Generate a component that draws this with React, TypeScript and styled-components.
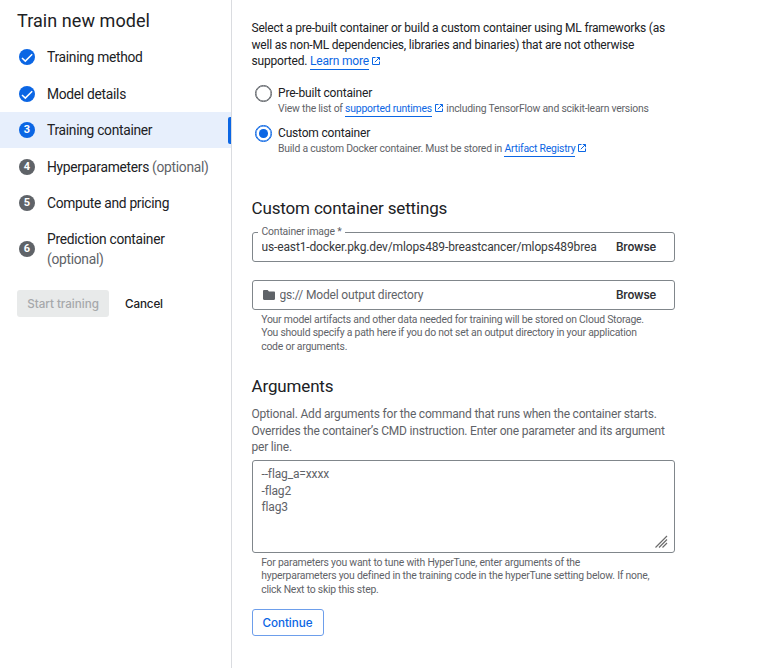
import React from "react";
import styled, { createGlobalStyle, css } from "styled-components";

const ink = "#202124";
const muted = "#5f6368";
const blue = "#0b66e4";
const outline = "#80868b";

const GlobalStyle = createGlobalStyle`
  * { box-sizing: border-box; }
  body { margin: 0; background: #fff; color: ${ink}; font-family: Roboto, "Liberation Sans", sans-serif; }
`;

const Page = styled.div`
  display: flex;
  width: 769px;
  height: 668px;
  overflow: hidden;
  white-space: nowrap;
`;

const Sidebar = styled.aside`
  flex: none;
  width: 232px;
  border-right: 1px solid #dadce0;
`;

const SidebarTitle = styled.h1`
  margin: 0;
  padding: 9px 0 6px 17px;
  font-size: 18px;
  font-weight: 400;
  line-height: 24px;
  letter-spacing: 0.07px;
`;

const StepList = styled.ol`
  list-style: none;
  margin: 0;
  padding: 0;
`;

const StepItem = styled.li<{ $active?: boolean }>`
  display: flex;
  align-items: center;
  min-height: 36.4px;
  padding: 8.4px 0 8px 19px;
  gap: 12px;
  font-size: 13.8px;
  line-height: 20px;
  letter-spacing: -0.29px;
  ${({ $active }) =>
    $active &&
    css`
      background: #e7effc;
    `}
`;

const StepBadge = styled.span<{ $tone: string }>`
  display: flex;
  flex: none;
  align-items: center;
  justify-content: center;
  width: 16px;
  height: 16px;
  border-radius: 50%;
  background: ${({ $tone }) => $tone};
  color: #fff;
  font-size: 11px;
  font-weight: 700;
  line-height: 16px;
  letter-spacing: 0;
`;

const StepLabel = styled.span`
  flex: 1;
`;

const OptionalText = styled.span`
  color: ${muted};
`;

const ActiveBar = styled.span`
  width: 3px;
  height: 27px;
  border-radius: 2px 0 0 2px;
  background: ${blue};
  margin: -4px 0;
`;

const SidebarActions = styled.div`
  display: flex;
  padding: 13px 0 0 17px;
  gap: 7px;
`;

const Button = styled.button<{ $kind: "disabled" | "text" | "outlined" | "inline" }>`
  display: flex;
  align-items: center;
  justify-content: center;
  height: 27px;
  padding: 0;
  border: 0;
  border-radius: 3px;
  background: transparent;
  color: ${ink};
  font: 500 11.667px Inter, "Liberation Sans", sans-serif;
  letter-spacing: -0.03px;
  ${({ $kind }) =>
    $kind === "disabled" &&
    css`
      width: 92px;
      background: #e8eaea;
      color: #a6a8aa;
    `}
  ${({ $kind }) =>
    $kind === "text" &&
    css`
      width: 56px;
      letter-spacing: -0.15px;
    `}
  ${({ $kind }) =>
    $kind === "outlined" &&
    css`
      width: 72px;
      margin-top: 13px;
      border: 1px solid #6d9eeb;
      color: ${blue};
    `}
  ${({ $kind }) =>
    $kind === "inline" &&
    css`
      flex: none;
      width: 56px;
      margin-right: 9.500px;
      font-weight: 600;
      font-size: 11.4px;
      letter-spacing: -0.16px;
      color: #303236;
    `}
`;

const Main = styled.main`
  width: 423px;
  margin-left: 19.5px;
  padding-top: 20px;
`;

const Paragraph = styled.p<{ $muted?: boolean; $top?: number }>`
  margin: ${({ $top = 0 }) => $top}px 0 0;
  color: ${({ $muted }) => ($muted ? muted : ink)};
  font-size: 12px;
  line-height: 16.667px;
  letter-spacing: -0.195px;
`;

const Link = styled.a`
  color: ${blue};
  padding-bottom: 1px;
  border-bottom: 1px solid ${blue};
  text-decoration: none;
`;

const LinkIcon = styled.svg`
  width: 10px;
  height: 10px;
  margin: 0 0 -1px 2px;
`;

const RadioGroup = styled.div`
  display: flex;
  flex-direction: column;
  gap: 10px;
  padding: 15px 0 0 3.5px;
`;

const RadioRow = styled.label`
  display: flex;
  gap: 6.5px;
  height: 30px;
`;

const RadioMark = styled.span<{ $checked?: boolean }>`
  flex: none;
  display: flex;
  align-items: center;
  justify-content: center;
  width: 16.5px;
  height: 16.5px;
  border: 1.5px solid ${({ $checked }) => ($checked ? blue : muted)};
  box-shadow: inset 0 0 0 0.5px ${({ $checked }) => ($checked ? blue : muted)};
  border-radius: 50%;
  &::after {
    content: "";
    width: 8.5px;
    height: 8.5px;
    border-radius: 50%;
    background: ${({ $checked }) => ($checked ? blue : "transparent")};
  }
`;

const RadioTitle = styled.div`
  font-size: 12px;
  line-height: 17px;
  letter-spacing: -0.18px;
`;

const RadioHint = styled.div`
  color: ${muted};
  font-size: 10.4px;
  line-height: 13px;
  letter-spacing: -0.215px;
`;

const SectionTitle = styled.h2<{ $top: number }>`
  margin: ${({ $top }) => $top}px 0 0;
  font-size: 17px;
  font-weight: 400;
  line-height: 24px;
  letter-spacing: -0.15px;
`;

const Field = styled.div<{ $top: number }>`
  position: relative;
  display: flex;
  align-items: center;
  height: 30px;
  margin-top: ${({ $top }) => $top}px;
  padding-left: 9px;
  border: 1px solid ${outline};
  border-radius: 3px;
`;

const FloatingLabel = styled.span`
  position: absolute;
  top: -8px;
  left: 5.5px;
  padding: 0 3.5px;
  background: #fff;
  color: ${muted};
  font-size: 10.4px;
  line-height: 13px;
  letter-spacing: -0.18px;
`;

const FieldValue = styled.span<{ $placeholder?: boolean }>`
  flex: 1;
  overflow: hidden;
  color: ${({ $placeholder }) => ($placeholder ? muted : "#37393c")};
  font-size: 12px;
  letter-spacing: ${({ $placeholder }) => ($placeholder ? -0.16 : -0.135)}px;
`;

const FolderIcon = styled.svg`
  width: 14px;
  height: 14px;
  margin-right: 4px;
`;

const HelperText = styled.p<{ $top: number }>`
  margin: ${({ $top }) => $top}px 0 0;
  padding-left: 9.7px;
  color: ${muted};
  font-size: 10.4px;
  line-height: 13.333px;
  letter-spacing: -0.215px;
`;

const TextArea = styled.div`
  display: flex;
  justify-content: space-between;
  height: 93px;
  margin-top: 4px;
  padding: 5px 6px 4px 9px;
  border: 1px solid ${outline};
  border-radius: 3px;
  color: ${muted};
  font-size: 12px;
  line-height: 16.667px;
  letter-spacing: -0.14px;
`;

const ResizeGrip = styled.svg`
  align-self: flex-end;
  width: 13px;
  height: 13px;
`;

function CheckGlyph() {
  return (
    <svg width="16" height="16" viewBox="0 0 16 16" fill="none">
      <path d="M3 9 6.3 12.1 13.2 5.2" stroke="#fff" strokeWidth="1.5" />
    </svg>
  );
}

function ExternalLink({ children }: { children: React.ReactNode }) {
  return (
    <>
      <Link>{children}</Link>
      <LinkIcon viewBox="0 0 10 10" fill="none" stroke={blue} strokeWidth="1">
        <path d="M4.5 1.500H1.500v7h7V5.500M5.800 1.500h2.700v2.700M8.500 1.500 3.800 6.200" />
      </LinkIcon>
    </>
  );
}

const steps = [
  { label: "Training method", state: "done" },
  { label: "Model details", state: "done" },
  { label: "Training container", state: "active" },
  { label: "Hyperparameters", state: "todo", optional: true },
  { label: "Compute and pricing", state: "todo" },
  { label: "Prediction container", state: "todo", optional: true, wrap: true },
];

export default function App() {
  return (
    <Page>
      <GlobalStyle />
      <Sidebar>
        <SidebarTitle>Train new model</SidebarTitle>
        <StepList>
          {steps.map((step, i) => (
            <StepItem key={step.label} $active={step.state === "active"}>
              <StepBadge $tone={step.state === "todo" ? muted : blue}>
                {step.state === "done" ? <CheckGlyph /> : i + 1}
              </StepBadge>
              <StepLabel>
                {step.label}
                {step.wrap ? <br /> : " "}
                {step.optional && <OptionalText>(optional)</OptionalText>}
              </StepLabel>
              {step.state === "active" && <ActiveBar />}
            </StepItem>
          ))}
        </StepList>
        <SidebarActions>
          <Button $kind="disabled" disabled>Start training</Button>
          <Button $kind="text">Cancel</Button>
        </SidebarActions>
      </Sidebar>
      <Main>
        <Paragraph>
          Select a pre-built container or build a custom container using ML frameworks (as
          <br />
          well as non-ML dependencies, libraries and binaries) that are not otherwise
          <br />
          supported. <ExternalLink>Learn more</ExternalLink>
        </Paragraph>
        <RadioGroup>
          <RadioRow>
            <RadioMark />
            <div>
              <RadioTitle>Pre-built container</RadioTitle>
              <RadioHint>
                View the list of <ExternalLink>supported runtimes</ExternalLink> including TensorFlow and
                scikit-learn versions
              </RadioHint>
            </div>
          </RadioRow>
          <RadioRow>
            <RadioMark $checked />
            <div>
              <RadioTitle>Custom container</RadioTitle>
              <RadioHint>
                Build a custom Docker container. Must be stored in <ExternalLink>Artifact Registry</ExternalLink>
              </RadioHint>
            </div>
          </RadioRow>
        </RadioGroup>

        <SectionTitle $top={41}>Custom container settings</SectionTitle>
        <Field $top={12}>
          <FloatingLabel>Container image *</FloatingLabel>
          <FieldValue>us-east1-docker.pkg.dev/mlops489-breastcancer/mlops489brea</FieldValue>
          <Button $kind="inline">Browse</Button>
        </Field>
        <Field $top={18}>
          <FolderIcon viewBox="0 0 14 14">
            <path d="M1 3.2C1 2.5 1.5 2 2.2 2h3.4L7 3.4h5c.6 0 1 .5 1 1.1v6.3c0 .7-.4 1.2-1 1.2H2.2C1.5 12 1 11.5 1 10.8Z" fill={muted} />
          </FolderIcon>
          <FieldValue $placeholder>gs:// Model output directory</FieldValue>
          <Button $kind="inline">Browse</Button>
        </Field>
        <HelperText $top={3}>
          Your model artifacts and other data needed for training will be stored on Cloud Storage.
          <br />
          You should specify a path here if you do not set an output directory in your application
          <br />
          code or arguments.
        </HelperText>

        <SectionTitle $top={21}>Arguments</SectionTitle>
        <Paragraph $muted $top={8}>
          Optional. Add arguments for the command that runs when the container starts.
          <br />
          Overrides the container’s CMD instruction. Enter one parameter and its argument
          <br />
          per line.
        </Paragraph>
        <TextArea>
          <div>
            --flag_a=xxxx
            <br />
            -flag2
            <br />
            flag3
          </div>
          <ResizeGrip viewBox="0 0 13 13" stroke="#6b6b6b" strokeWidth="1.2">
            <path d="M.5 12.5 12 1M4 12.5 12 4.5M7.5 12.5 12 8" />
          </ResizeGrip>
        </TextArea>
        <HelperText $top={3}>
          For parameters you want to tune with HyperTune, enter arguments of the
          <br />
          hyperparameters you defined in the training code in the hyperTune setting below. If none,
          <br />
          click Next to skip this step.
        </HelperText>
        <Button $kind="outlined">Continue</Button>
      </Main>
    </Page>
  );
}
